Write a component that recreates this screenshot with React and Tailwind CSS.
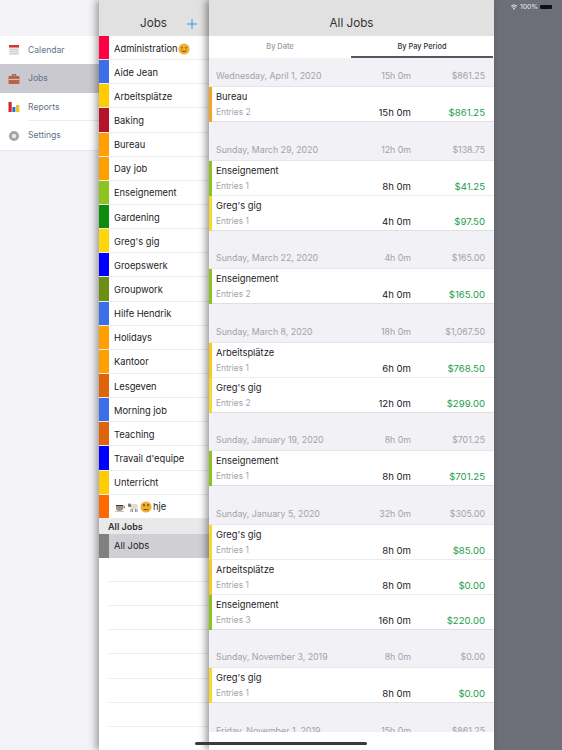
const FONT = "font-['Inter','Liberation_Sans',sans-serif]"

const JOBS = [
  ['Administration', '#ff0044', 'grin'],
  ['Aide Jean', '#3b6fe8'],
  ['Arbeitsplätze', '#ffcc00'],
  ['Baking', '#b3142a'],
  ['Bureau', '#ff9f00'],
  ['Day job', '#ff9f00'],
  ['Enseignement', '#8fc41e'],
  ['Gardening', '#0b8c0b'],
  ["Greg's gig", '#ffd60a'],
  ['Groepswerk', '#0000ff'],
  ['Groupwork', '#6b8e13'],
  ['Hilfe Hendrik', '#3b6fe8'],
  ['Holidays', '#ff9f00'],
  ['Kantoor', '#ff9f00'],
  ['Lesgeven', '#e0640c'],
  ['Morning job', '#3b6fe8'],
  ['Teaching', '#e0640c'],
  ["Travail d'equipe", '#0000ff'],
  ['Unterricht', '#ffcc00'],
  ['hje', '#ff6a00', 'mix'],
]

const SECTIONS = [
  { date: 'Wednesday, April 1, 2020', time: '15h 0m', pay: '$861.25', rows: [['Bureau', 2, '15h 0m', '$861.25', '#f5a623']] },
  {
    date: 'Sunday, March 29, 2020', time: '12h 0m', pay: '$138.75',
    rows: [['Enseignement', 1, '8h 0m', '$41.25', '#8fc41e'], ["Greg's gig", 1, '4h 0m', '$97.50', '#f7d92e']],
  },
  { date: 'Sunday, March 22, 2020', time: '4h 0m', pay: '$165.00', rows: [['Enseignement', 2, '4h 0m', '$165.00', '#8fc41e']] },
  {
    date: 'Sunday, March 8, 2020', time: '18h 0m', pay: '$1,067.50',
    rows: [['Arbeitsplätze', 1, '6h 0m', '$768.50', '#f7cb1e'], ["Greg's gig", 2, '12h 0m', '$299.00', '#f7d92e']],
  },
  { date: 'Sunday, January 19, 2020', time: '8h 0m', pay: '$701.25', rows: [['Enseignement', 1, '8h 0m', '$701.25', '#8fc41e']] },
  {
    date: 'Sunday, January 5, 2020', time: '32h 0m', pay: '$305.00',
    rows: [
      ["Greg's gig", 1, '8h 0m', '$85.00', '#f7d92e'],
      ['Arbeitsplätze', 1, '8h 0m', '$0.00', '#f7cb1e'],
      ['Enseignement', 3, '16h 0m', '$220.00', '#8fc41e'],
    ],
  },
  { date: 'Sunday, November 3, 2019', time: '8h 0m', pay: '$0.00', rows: [["Greg's gig", 1, '8h 0m', '$0.00', '#f7d92e']] },
  { date: 'Friday, November 1, 2019', time: '15h 0m', pay: '$861.25', rows: [] },
]

function Face({ mouth, brow }) {
  return (
    <svg viewBox="0 0 12 12" className="h-3 w-3 shrink-0">
      <circle cx="6" cy="6" r="5.6" fill="#f2b033" />
      <circle cx="4" cy="4.8" r="0.8" fill="#6b3f10" />
      <circle cx="8" cy="4.8" r="0.8" fill="#6b3f10" />
      {brow && <path d="M2.6 3.2 5 3.8M9.4 3.2 7 3.8" stroke="#6b3f10" strokeWidth="0.7" />}
      <path d={mouth} fill="none" stroke="#6b3f10" strokeWidth="0.9" strokeLinecap="round" />
    </svg>
  )
}

function Coffee() {
  return (
    <svg viewBox="0 0 12 12" className="h-3 w-3 shrink-0">
      <path d="M2 4h7v3a3 3 0 0 1-3 3H5a3 3 0 0 1-3-3z" fill="#9a918a" />
      <path d="M2 4h7v1H2z" fill="#4c3a2e" />
      <path d="M9 5h1.5v2H9" fill="none" stroke="#9a918a" />
      <path d="M1 10.4h9" stroke="#c2bcb6" />
    </svg>
  )
}

function Ram() {
  return (
    <svg viewBox="0 0 12 12" className="h-3 w-3 shrink-0">
      <rect x="3" y="3" width="8" height="5" rx="2" fill="#dedcd5" />
      <rect x="1" y="2.5" width="3" height="3.5" rx="1.2" fill="#77706a" />
      <path d="M4 8v3M5.6 8v3M8.4 8v3M10 8v3" stroke="#8d867f" />
    </svg>
  )
}

function SideIcon({ kind }) {
  if (kind === 'calendar') {
    return (
      <svg viewBox="0 0 12 12" className="h-3 w-3">
        <rect x="1" y="1" width="10" height="10" fill="#e7e5df" />
        <rect x="1" y="1" width="10" height="2.5" fill="#d8352c" />
        <path d="M2 5.5h8M2 7.5h8M2 9.5h8" stroke="#c6c4be" strokeWidth="0.6" />
      </svg>
    )
  }
  if (kind === 'jobs') {
    return (
      <svg viewBox="0 0 12 12" className="h-3 w-3">
        <path d="M4.2 3V1.8h3.6V3" fill="none" stroke="#7a4a30" />
        <rect x="0.5" y="3" width="11" height="8" rx="1" fill="#b4654a" />
        <path d="M0.5 6.5h11" stroke="#e3b9a2" />
      </svg>
    )
  }
  if (kind === 'reports') {
    return (
      <svg viewBox="0 0 12 12" className="h-3 w-3">
        <rect x="0.5" y="1" width="3.2" height="10" fill="#d8232a" />
        <rect x="4.4" y="6" width="3" height="5" fill="#2f6fd0" />
        <rect x="8" y="4" width="3.4" height="7" fill="#efc12a" />
      </svg>
    )
  }
  return (
    <svg viewBox="0 0 12 12" className="h-3 w-3">
      <circle cx="6" cy="6" r="5" fill="#a5a5a8" />
      <circle cx="6" cy="6" r="2.2" fill="#e9e9ea" />
    </svg>
  )
}

function Sidebar() {
  const items = [
    ['Calendar', 'calendar', 'h-[28px]'],
    ['Jobs', 'jobs', 'h-[29px] bg-[#c9c9cf]'],
    ['Reports', 'reports', 'h-[28px]'],
    ['Settings', 'settings', 'h-[29px]'],
  ]
  return (
    <div className="w-[99px] shrink-0 bg-[#f2f2f7] pt-[36px]">
      <div className="border-b border-[#e8e8ec] bg-white">
        {items.map(([label, icon, cls]) => (
          <div key={label} className={`flex items-center gap-[8px] pl-[8px] text-[8.6px] text-[#67718a] ${cls}`}>
            <SideIcon kind={icon} />
            <span className={`flex h-full flex-1 items-center ${label === 'Reports' ? 'border-b border-[#ececee] pt-[1px]' : ''}`}>{label}</span>
          </div>
        ))}
      </div>
    </div>
  )
}

function JobsPanel() {
  return (
    <div className="relative z-10 h-full w-[110px] shrink-0 bg-white shadow-[-3px_0_7px_rgba(0,0,0,0.35)]">
      <div className="flex h-[36px] items-end justify-between bg-[#e1e1e1] pb-[4px] pl-[41px] pr-[12px]">
        <span className="text-[11.7px] leading-[18px] text-[#333]">Jobs</span>
        <svg viewBox="0 0 12 12" className="mb-[3px] h-[10px] w-[10px]">
          <path d="M6 0v12M0 6h12" stroke="#1d8fe8" strokeWidth="1.1" />
        </svg>
      </div>
      {JOBS.map(([name, color, emoji]) => (
        <div key={name} className="flex h-[24.15px] items-center border-b border-[#ececee]">
          <div className="h-full w-[10px] shrink-0" style={{ backgroundColor: color }} />
          <div className="flex items-center pl-[5px] pt-[2px] text-[9.33px] text-[#1c1c1e]">
            {emoji === 'mix' && (
              <span className="flex items-center gap-[1px] pr-[1px]">
                <Coffee />
                <Ram />
                <Face mouth="M4 8.6h4" brow />
              </span>
            )}
            <span>{name}</span>
            {emoji === 'grin' && <Face mouth="M3.6 7.4c1 1.6 3.8 1.6 4.8 0" />}
          </div>
        </div>
      ))}
      <div className="flex h-[15px] items-center bg-[#e9e9ea] pl-[9px] pt-[1px] text-[9px] font-semibold text-[#333]">All Jobs</div>
      <div className="flex h-[24px] items-center bg-[#cfcfd4]">
        <div className="h-full w-[10px] bg-[#808080]" />
        <span className="pl-[5px] pt-[1px] text-[9.33px] text-[#1c1c1e]">All Jobs</span>
      </div>
      {[0, 1, 2, 3, 4, 5, 6].map((i) => (
        <div key={i} className="ml-[10px] h-[24.15px] border-b border-[#ececee]" />
      ))}
    </div>
  )
}

function Section({ section }) {
  return (
    <div>
      <div className="flex h-[20px] items-center justify-between pl-[7px] pr-[9px] text-[8.8px] text-[#a3a3a8]">
        <span>{section.date}</span>
        <div className="flex">
          <span className="w-[60px] text-right">{section.time}</span>
          <span className="w-[74px] text-right">{section.pay}</span>
        </div>
      </div>
      {section.rows.length > 0 && (
        <div className="border-t border-[#e6e6ea] bg-white">
          {section.rows.map(([name, n, time, pay, color], i) => (
            <div key={name} className="flex h-[35px]">
              <div className="w-[3px] shrink-0" style={{ backgroundColor: color }} />
              <div className={`flex-1 pl-[4px] pr-[9px] pt-[2px] border-b ${i < section.rows.length - 1 ? 'border-[#ececee]' : 'border-[#e0e0e4]'}`}>
                <div className="text-[9.33px] leading-[15px] text-[#1c1c1e]">{name}</div>
                <div className="flex items-center justify-between leading-[17px]">
                  <span className="text-[8.3px] text-[#a3a3a8]">Entries {n}</span>
                  <div className="flex text-[9.6px]">
                    <span className="text-[#1c1c1e]">{time}</span>
                    <span className="w-[74px] text-right text-[#1e9e4e]">{pay}</span>
                  </div>
                </div>
              </div>
            </div>
          ))}
        </div>
      )}
    </div>
  )
}

function MainPanel() {
  return (
    <div className="relative z-20 flex h-full w-[285px] shrink-0 flex-col overflow-hidden bg-white shadow-[-3px_0_7px_rgba(0,0,0,0.4)]">
      <div className="flex h-[36px] shrink-0 items-end justify-center bg-[#e1e1e1] pb-[4px]">
        <span className="text-[11.7px] leading-[18px] text-[#333]">All Jobs</span>
      </div>
      <div className="flex h-[22px] shrink-0 text-[7.4px] font-medium">
        <div className="flex flex-1 items-center justify-center text-[#9a9a9e]">By Date</div>
        <div className="mr-[1px] flex flex-1 items-center justify-center border-b-[2px] border-[#55575c] pt-[1px] text-[#333]">By Pay Period</div>
      </div>
      <div className="h-[674px] shrink-0 overflow-hidden bg-[#f1f1f6] pt-[8px]">
        <div className="flex flex-col gap-[17.5px]">
          {SECTIONS.map((s) => (
            <Section key={s.date} section={s} />
          ))}
        </div>
      </div>
      <div className="flex-1 bg-white" />
    </div>
  )
}

export default function App() {
  return (
    <div className={`relative flex h-[750px] w-[562px] overflow-hidden bg-[#6c6f78] ${FONT}`}>
      <Sidebar />
      <JobsPanel />
      <MainPanel />
      <div className="flex flex-1 items-start justify-end gap-[2px] pr-[10px] pt-[3px] text-[6.8px] leading-[7px] text-[#e8e8ea]">
        <svg viewBox="0 0 12 10" className="mt-[0.5px] h-[6px] w-[8px]">
          <path d="M1 3.6a7.4 7.4 0 0 1 10 0M2.8 5.6a4.8 4.8 0 0 1 6.4 0" fill="none" stroke="#fff" strokeWidth="1.3" />
          <path d="M6 9.5 4.3 7.6a2.5 2.5 0 0 1 3.4 0z" fill="#fff" />
        </svg>
        <span>100%</span>
        <div className="mt-[1.5px] h-[4.5px] w-[12px] rounded-[1px] bg-[#111]" />
      </div>
      {/* home indicator */}
      <div className="absolute bottom-[5px] left-[195px] z-30 h-[3px] w-[172px] rounded-full bg-[#3a3a3c]" />
    </div>
  )
}
